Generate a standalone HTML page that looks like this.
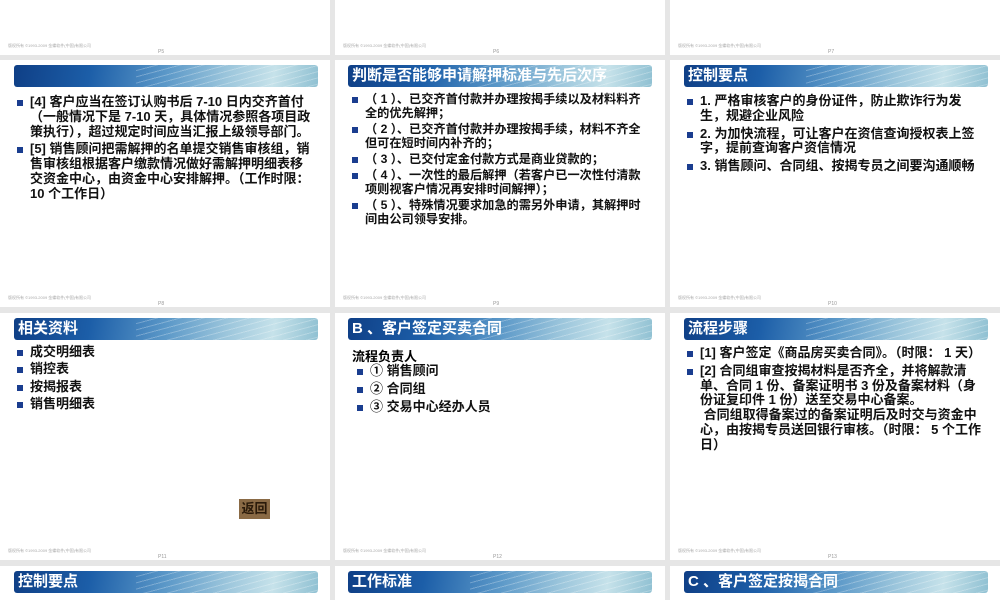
<!DOCTYPE html><html><head><meta charset="utf-8"><style>
*{margin:0;padding:0;box-sizing:border-box}
html,body{width:1000px;height:600px;overflow:hidden}
body{background:#e6e6e6;position:relative;font-family:"Liberation Sans","Noto Sans CJK SC",sans-serif}
.s{position:absolute;width:330px;height:247px;background:#fff;overflow:hidden}
.b{position:absolute;left:14px;top:5px;width:304px;height:22px;border-radius:3px;
background:linear-gradient(100deg,#0f3f86 0%,#1c5ea8 25%,#5b98c8 50%,#9cc6dc 70%,#c6e2ea 85%,#8fc0d2 100%);
color:#fff;font-weight:bold;font-size:15px;line-height:22px;padding-left:4px;overflow:hidden;white-space:nowrap}
.b::after{content:"";position:absolute;left:40%;top:0;right:0;bottom:0;background:repeating-linear-gradient(165deg,rgba(255,255,255,0) 0 5px,rgba(255,255,255,.25) 5px 6px)}
.b span{position:relative;z-index:1}
.f{position:absolute;left:8px;bottom:6px;font-size:4px;color:#aaa}
.p{position:absolute;left:158px;bottom:0;font-size:5px;color:#999}
ul{position:absolute;left:16px;top:33px;right:18px;list-style:none;font-weight:bold;color:#111}
li{position:relative;padding-left:14px}
li::before{content:"";position:absolute;left:1px;top:5px;width:6px;height:6px;background:#1a3d8f}
.t1 li{font-size:13px;line-height:14.8px;margin-bottom:3px}
.t2 li{font-size:12.2px;line-height:14px;margin-bottom:2px}
</style></head><body>

<div class="s" style="left:0;top:-192px"><div class="f">版权所有 ©1993-2009 金蝶软件(中国)有限公司</div><div class="p">P5</div></div>
<div class="s" style="left:335px;top:-192px"><div class="f">版权所有 ©1993-2009 金蝶软件(中国)有限公司</div><div class="p">P6</div></div>
<div class="s" style="left:670px;top:-192px"><div class="f">版权所有 ©1993-2009 金蝶软件(中国)有限公司</div><div class="p">P7</div></div>

<div class="s" style="left:0;top:60px"><div class="b"><span></span></div>
<ul class="t1" style="top:35px"><li>[4] 客户应当在签订认购书后 7-10 日内交齐首付（一般情况下是 7-10 天，具体情况参照各项目政策执行），超过规定时间应当汇报上级领导部门。</li><li>[5] 销售顾问把需解押的名单提交销售审核组，销售审核组根据客户缴款情况做好需解押明细表移交资金中心，由资金中心安排解押。（工作时限： 10 个工作日）</li></ul>
<div class="f">版权所有 ©1993-2009 金蝶软件(中国)有限公司</div><div class="p">P8</div></div>

<div class="s" style="left:335px;top:60px"><div class="b" style="left:13px"><span>判断是否能够申请解押标准与先后次序</span></div>
<ul class="t2" style="top:32px;right:14px"><li>（ 1 ）、已交齐首付款并办理按揭手续以及材料料齐全的优先解押；</li><li>（ 2 ）、已交齐首付款并办理按揭手续，材料不齐全但可在短时间内补齐的；</li><li>（ 3 ）、已交付定金付款方式是商业贷款的；</li><li>（ 4 ）、一次性的最后解押（若客户已一次性付清款项则视客户情况再安排时间解押）；</li><li>（ 5 ）、特殊情况要求加急的需另外申请，其解押时间由公司领导安排。</li></ul>
<div class="f">版权所有 ©1993-2009 金蝶软件(中国)有限公司</div><div class="p">P9</div></div>

<div class="s" style="left:670px;top:60px"><div class="b"><span>控制要点</span></div>
<ul class="t1" style="top:34px"><li>1. 严格审核客户的身份证件，防止欺诈行为发生，规避企业风险</li><li>2. 为加快流程，可让客户在资信查询授权表上签字，提前查询客户资信情况</li><li>3. 销售顾问、合同组、按揭专员之间要沟通顺畅</li></ul>
<div class="f">版权所有 ©1993-2009 金蝶软件(中国)有限公司</div><div class="p">P10</div></div>

<div class="s" style="left:0;top:313px"><div class="b"><span>相关资料</span></div>
<ul class="t1" style="top:32px"><li style="margin-bottom:2.7px">成交明细表</li><li style="margin-bottom:2.7px">销控表</li><li style="margin-bottom:2.7px">按揭报表</li><li>销售明细表</li></ul>
<div style="position:absolute;left:239px;top:186px;width:31px;height:20px;background:#8a6a45;color:#2a1a0a;font-size:13px;font-weight:bold;line-height:20px;text-align:center">返回</div>
<div class="f">版权所有 ©1993-2009 金蝶软件(中国)有限公司</div><div class="p">P11</div></div>

<div class="s" style="left:335px;top:313px"><div class="b" style="left:13px"><span>B 、客户签定买卖合同</span></div>
<div style="position:absolute;left:17px;top:33px;font-weight:bold;font-size:13px">流程负责人</div>
<ul class="t1" style="top:51px;left:21px"><li>① 销售顾问</li><li>② 合同组</li><li>③ 交易中心经办人员</li></ul>
<div class="f">版权所有 ©1993-2009 金蝶软件(中国)有限公司</div><div class="p">P12</div></div>

<div class="s" style="left:670px;top:313px"><div class="b"><span>流程步骤</span></div>
<ul class="t1" style="top:33px"><li>[1] 客户签定《商品房买卖合同》。（时限： 1 天）</li><li>[2] 合同组审查按揭材料是否齐全，并将解款清单、合同 1 份、备案证明书 3 份及备案材料（身份证复印件 1 份）送至交易中心备案。<br>&nbsp;合同组取得备案过的备案证明后及时交与资金中心，由按揭专员送回银行审核。（时限： 5 个工作日）</li></ul>
<div class="f">版权所有 ©1993-2009 金蝶软件(中国)有限公司</div><div class="p">P13</div></div>

<div class="s" style="left:0;top:566px;height:34px"><div class="b"><span>控制要点</span></div></div>
<div class="s" style="left:335px;top:566px;height:34px"><div class="b" style="left:13px"><span>工作标准</span></div></div>
<div class="s" style="left:670px;top:566px;height:34px"><div class="b"><span>C 、客户签定按揭合同</span></div></div>
</body></html>
